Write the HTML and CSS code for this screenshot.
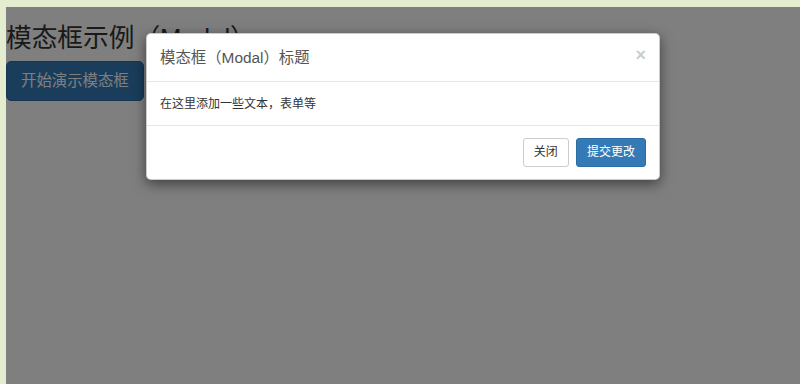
FILE: index.html
```html
<html>
   <head>
      <title>模态框示例</title>
      <meta charset="utf-8">
      <link rel="stylesheet" href="styles.css">
   </head>
   <body>
      <div class="page">
         <h2>模态框示例（Modal）</h2>
         <button class="btn btn-primary btn-lg">开始演示模态框</button>
         <div class="backdrop"></div>
         <div class="modal">
            <div class="modal-dialog">
               <div class="modal-content">
                  <div class="modal-header">
                     <button class="close">&times;</button>
                     <h4 class="modal-title">模态框（Modal）标题</h4>
                  </div>
                  <div class="modal-body">在这里添加一些文本，表单等</div>
                  <div class="modal-footer">
                     <button class="btn btn-default">关闭</button>
                     <button class="btn btn-primary">提交更改</button>
                  </div>
               </div>
            </div>
         </div>
      </div>
   </body>
</html>
```
FILE: styles.css
```css
body {
   margin: 0;
   padding: 7px 0 0 6px;
   background: #e4edcf;
   font-family: "Liberation Sans", "Noto Sans CJK SC", sans-serif;
   font-size: 12px;
   line-height: 1.42857;
   color: #333;
   overflow: hidden;
}
.page {
   position: relative;
   background: #fff;
   height: 377px;
   overflow: hidden;
}
h2 {
   margin: 17px 0 9px;
   font-size: 25.7px;
   font-weight: normal;
   line-height: 1.1;
}
.btn {
   display: inline-block;
   font-family: inherit;
   font-size: 12px;
   line-height: 1.42857;
   padding: 5px 10px;
   border: 1px solid transparent;
   border-radius: 3px;
   cursor: pointer;
}
.btn-lg {
   font-size: 15.4px;
   padding: 8px 14px;
   border-radius: 5px;
}
.btn-primary {
   background: #337ab7;
   border-color: #2e6da4;
   color: #fff;
}
.btn-default {
   background: #fff;
   border-color: #ccc;
   color: #333;
}
.backdrop {
   position: absolute;
   top: 0;
   left: 0;
   right: 0;
   bottom: 0;
   background: rgba(0, 0, 0, .5);
}
.modal {
   position: absolute;
   top: 0;
   left: 0;
   right: 0;
   bottom: 0;
}
.modal-dialog {
   width: 514px;
   margin: 26px auto;
}
.modal-content {
   background: #fff;
   border: 1px solid rgba(0, 0, 0, .2);
   border-radius: 5px;
   box-shadow: 0 4px 13px rgba(0, 0, 0, .5);
}
.modal-header {
   padding: 13px 13px 12px;
   border-bottom: 1px solid #e5e5e5;
}
.modal-title {
   margin: 0;
   font-size: 15.4px;
   font-weight: normal;
   line-height: 1.42857;
   color: #555;
}
.close {
   float: right;
   margin-top: -1px;
   padding: 0;
   background: none;
   border: 0;
   font-family: inherit;
   font-size: 18px;
   font-weight: bold;
   line-height: 1;
   color: #000;
   opacity: .2;
}
.modal-body {
   padding: 14px 13px 12px;
}
.modal-footer {
   padding: 12px 13px 12px;
   border-top: 1px solid #e5e5e5;
   text-align: right;
}
.modal-footer .btn + .btn {
   margin-left: 4px;
}
```
